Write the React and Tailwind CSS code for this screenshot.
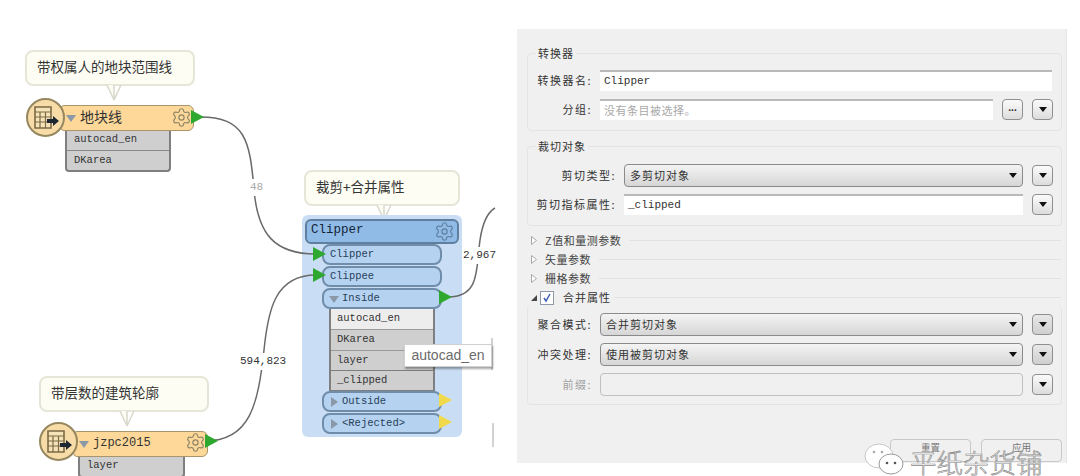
import { Settings } from "lucide-react";

const mono = "font-['Liberation_Mono','Noto_Sans_CJK_SC',monospace]";
const cjk = "font-['Noto_Sans_CJK_SC','Noto_Sans',sans-serif]";

// --- canvas bits ---
const Note = ({ className, tail, children }) => (
  <div className={`absolute h-[36px] rounded-lg border-2 border-[#e6e6d8] bg-[#fdfdf3] flex items-center pl-[10px] pb-[3px] text-[13.500px] text-[#333] ${cjk} ${className}`}>
    {children}
    <svg className="absolute top-[33px]" style={{ left: tail }} width="16" height="18" viewBox="0 0 16 18">
      <path d="M1 0 L8 15 L8 0 M15 0 L8 15" fill="#fdfdf3" stroke="#d8d8cc" strokeWidth="1.5" />
    </svg>
  </div>
);

const Port = ({ color = "#2fa82f", className }) => (
  <svg className={`absolute ${className}`} width="13" height="14" viewBox="0 0 13 14">
    <path d="M0 0 L13 7 L0 14 Z" fill={color} />
  </svg>
);

const Caret = ({ right, color = "#8a98a8" }) => (
  <svg width="10" height="10" viewBox="0 0 10 10" className="shrink-0">
    {right ? <path d="M2 0 L9 5 L2 10 Z" fill={color} /> : <path d="M0 2 L10 2 L5 9 Z" fill={color} />}
  </svg>
);

const TableBadge = ({ className }) => (
  <div className={`absolute size-[39px] rounded-full border-2 border-[#96875f] bg-[#f7dca8] flex items-center justify-center ${className}`}>
    <svg width="28" height="24" viewBox="0 0 28 24">
      <path d="M3 1 H19 V22 H3 Z" fill="#f5e2b8" stroke="#7c6a45" strokeWidth="1.6" />
      <path d="M3 6 H19 M3 11 H19 M3 16 H19 M8 6 V22 M13.500 6 V22" stroke="#7c6a45" strokeWidth="1.2" />
      <path d="M15 13 H21 V10 L27 15 L21 20 V17 H15 Z" fill="#1d2733" />
    </svg>
  </div>
);

const Gear = ({ className }) => <Settings className={`absolute size-[21px] text-[#8d8467] ${className}`} strokeWidth={1.3} />;

const Reader = ({ className, name, nameClass, left, width }) => (
  <div
    className={`absolute flex items-center h-[26px] rounded-r-md rounded-l-sm border border-[#a8956c] bg-[#fdd899] ${className}`}
    style={{ left, width }}
  >
    <div className="w-[5px] shrink-0" />
    <Caret />
    <span className={`ml-[4px] -mt-[3px] text-[#333] ${nameClass}`}>{name}</span>
  </div>
);

const AttrRows = ({ className, rows }) => (
  <div className={`absolute flex flex-col border-x-2 border-b-2 border-[#7f7f7f] rounded-b bg-[#cfcfcf] ${mono} text-[10.500px] text-[#333] ${className}`}>
    {rows.map((r, i) => (
      <div key={r} className={`h-[20px] flex items-center pl-[7px] ${i > 0 ? "border-t border-[#8a8a8a]" : ""}`}>
        {r}
      </div>
    ))}
  </div>
);

const ClipPort = ({ label, arrow }) => (
  <div className={`h-[21px] mb-[1px] w-[120px] rounded-lg border-2 border-[#6f8daa] bg-[#b5d3f1] flex items-center pl-[5px] gap-[3px] ${mono} text-[10.500px] text-[#274058]`}>
    {arrow === "down" && <Caret />}
    {arrow === "right" && <Caret right />}
    <span className={arrow ? "" : "pl-[1px]"}>{label}</span>
  </div>
);

const EdgeLabel = ({ className, children }) => (
  <span className={`absolute bg-white px-[1px] ${mono} text-[11px] text-[#333] ${className}`}>{children}</span>
);

// --- panel bits ---
const Group = ({ title, className, children }) => (
  <div className={`relative ml-[10px] mr-[4px] border border-[#e4e4e4] rounded-sm ${className}`}>
    {title && <span className={`absolute -top-[8px] left-[8px] bg-[#f0f0f0] px-[2px] ${cjk} text-[11px] tracking-[1px] leading-[14px] text-[#333]`}>{title}</span>}
    {children}
  </div>
);

const Label = ({ w, muted, children }) => (
  <span className={`shrink-0 text-right pr-[5px] ${cjk} text-[11px] tracking-[1.5px] ${muted ? "text-[#a0a0a0]" : "text-[#333]"}`} style={{ width: w }}>
    {children}
  </span>
);

const TextBox = ({ w, mono: isMono, placeholder, children }) => (
  <div
    className={`h-[21px] border-t-2 border-[#b9b9b9] bg-white flex items-center pl-[4px] ${isMono ? `${mono} text-[11px] text-[#333]` : `${cjk} text-[11px] tracking-[0.5px] text-[#a8a8a8]`}`}
    style={{ width: w }}
  >
    {placeholder || children}
  </div>
);

const TinyCaret = () => (
  <svg width="8" height="5" viewBox="0 0 8 5">
    <path d="M0 0 H8 L4 5 Z" fill="#111" />
  </svg>
);

const Select = ({ w, children }) => (
  <div
    className={`h-[23px] rounded-sm border border-[#8a8a8a] bg-gradient-to-b from-[#f4f4f4] to-[#d6d6d6] flex items-center justify-between pl-[5px] pr-[5px] ${cjk} text-[11px] tracking-[1px] text-[#333]`}
    style={{ width: w }}
  >
    {children}
    <TinyCaret />
  </div>
);

const SquareBtn = ({ children, dark }) => (
  <div className={`size-[21px] ml-[6px] shrink-0 rounded-sm border border-[#8f8f8f] flex items-center justify-center bg-gradient-to-b ${dark ? "from-[#e8e8e8] to-[#cfcfcf]" : "from-[#fbfbfb] to-[#dcdcdc]"}`}>
    {children || <TinyCaret />}
  </div>
);

const Collapsed = ({ children }) => (
  <div className="flex items-center h-[19px] pl-[14px] gap-[8px]">
    <svg width="6" height="9" viewBox="0 0 6 9"><path d="M0.500 0.500 L5.500 4.500 L0.500 8.500 Z" fill="#fff" stroke="#a8a8a8" /></svg>
    <span className={`${cjk} text-[11px] tracking-[0.5px] text-[#444]`}>{children}</span>
    <div className="flex-1 border-t border-[#e2e2e2] mr-[5px]" />
  </div>
);

const App = () => (
  <div className="flex w-[1080px] h-[476px] overflow-hidden bg-white">
    {/* Workbench canvas */}
    <div className="relative w-[517px] h-[476px] shrink-0 overflow-hidden">
      <Note className="left-[25px] top-[50px] w-[170px]" tail="79px">带权属人的地块范围线</Note>
      <Note className="left-[304px] top-[170px] w-[156px]" tail="70px">裁剪+合并属性</Note>
      <Note className="left-[39px] top-[376px] w-[170px]" tail="78px">带层数的建筑轮廓</Note>

      {/* Clipper transformer */}
      <div className="absolute left-[302px] top-[215px] w-[160px] h-[222px] rounded-md bg-[#c9def4] flex flex-col">
        <div className={`relative mx-[3px] mt-[4px] h-[25px] rounded-md border-2 border-[#5f7f9e] bg-[#8fbbe6] flex items-center pl-[4px] pb-[2px] ${mono} text-[12.500px] text-[#14263a]`}>
          Clipper
          <Gear className="!text-[#5f7f9e] right-[2px] top-[0px]" />
        </div>
        <div className="pl-[20px] flex flex-col">
          <ClipPort label="Clipper" />
          <ClipPort label="Clippee" />
          <ClipPort label="Inside" arrow="down" />
          <div className={`w-[106px] -mt-[1px] ml-[7px] border-x-2 border-[#7f7f7f] bg-[#cfcfcf] ${mono} text-[10.500px] text-[#333]`}>
            <div className="h-[20px] pl-[6px] flex items-center bg-[#eeeded]">autocad_en</div>
            <div className="h-[21px] pl-[6px] flex items-center border-t border-[#9a9a9a]">DKarea</div>
            <div className="h-[20px] pl-[6px] flex items-center border-t border-[#9a9a9a]">layer</div>
            <div className="h-[21px] pl-[6px] flex items-center border-y border-[#7f7f7f]">_clipped</div>
          </div>
          <ClipPort label="Outside" arrow="right" />
          <ClipPort label="<Rejected>" arrow="right" />
        </div>
      </div>

      <svg className="absolute inset-0" width="517" height="476" viewBox="0 0 517 476" fill="none">
        <path d="M200 117 C245 117 250 140 254 190 C258 235 275 254 316 254" stroke="#6a6a6a" strokeWidth="1.500" />
        <path d="M205 441 C250 441 258 405 264 350 C268 310 275 275 316 275" stroke="#6a6a6a" strokeWidth="1.500" />
        <path d="M448 297 C480 297 476 270 480 240 C483 220 488 212 495 208" stroke="#6a6a6a" strokeWidth="1.500" />
        <path d="M492 338 V370 M493 423 V447" stroke="#c4c4c4" strokeWidth="1.500" />
      </svg>

      <EdgeLabel className="left-[249px] top-[179px] !text-[#a9a9a9]">48</EdgeLabel>
      <EdgeLabel className="left-[239px] top-[353px]">594,823</EdgeLabel>
      <EdgeLabel className="left-[462px] top-[247px]">2,967</EdgeLabel>

      {/* reader: 地块线 */}
      <AttrRows className="left-[65px] top-[130px] w-[106px]" rows={["autocad_en", "DKarea"]} />
      <Reader className="top-[105px]" left="60px" width="134px" name="地块线" nameClass={`${cjk} text-[14px]`} />
      <TableBadge className="left-[26px] top-[98px]" />
      <Gear className="left-[171px] top-[107px]" />
      <Port className="left-[191px] top-[110px]" />

      <Port className="left-[313px] top-[247px]" />
      <Port className="left-[313px] top-[268px]" />
      <Port className="left-[439px] top-[290px]" />
      <Port color="#f1d94c" className="left-[439px] top-[393px]" />
      <Port color="#f1d94c" className="left-[439px] top-[415px]" />

      {/* hover tooltip */}
      <div className="absolute left-[404px] top-[344px] w-[88px] h-[23px] bg-white border border-[#d0d0d0] shadow-[1px_2px_2px_rgba(0,0,0,0.35)] flex items-center justify-center font-['Liberation_Sans',sans-serif] text-[14px] text-[#6b6b6b]">
        autocad_en
      </div>

      {/* reader: jzpc2015 */}
      <AttrRows className="left-[78px] top-[456px] w-[107px]" rows={["layer"]} />
      <Reader className="top-[431px]" left="73px" width="135px" name="jzpc2015" nameClass={`${mono} text-[12px]`} />
      <TableBadge className="left-[39px] top-[422px]" />
      <Gear className="left-[185px] top-[432px]" />
      <Port className="left-[205px] top-[434px]" />
    </div>

    {/* Parameters panel */}
    <div className="relative w-[550px] h-[434px] mt-[29px] shrink-0 bg-[#f0f0f0] border-r border-[#e6e6e6] pt-[24px] flex flex-col">
      <Group title="转换器" className="h-[78px] pt-[16px]">
        <div className="flex items-center gap-[3px]">
          <Label w="69px">转换器名:</Label>
          <TextBox w="452px" mono>Clipper</TextBox>
        </div>
        <div className="flex items-center gap-[3px] mt-[8px]">
          <Label w="69px">分组:</Label>
          <TextBox w="393px" placeholder="没有条目被选择。" />
          <SquareBtn>
            <span className="text-[10px] leading-none font-bold text-[#222]">···</span>
          </SquareBtn>
          <SquareBtn />
        </div>
      </Group>

      <Group title="裁切对象" className="h-[80px] mt-[15px] pt-[17px]">
        <div className="flex items-center gap-[3px]">
          <Label w="93px">剪切类型:</Label>
          <Select w="399px">多剪切对象</Select>
          <SquareBtn />
        </div>
        <div className="flex items-center gap-[3px] mt-[7px]">
          <Label w="93px">剪切指标属性:</Label>
          <TextBox w="399px" mono>_clipped</TextBox>
          <SquareBtn />
        </div>
      </Group>

      <div className="mt-[5px] flex flex-col">
        <Collapsed>Z值和量测参数</Collapsed>
        <Collapsed>矢量参数</Collapsed>
        <Collapsed>栅格参数</Collapsed>
        <div className="flex items-center h-[19px] pl-[14px] gap-[3px]">
          <svg width="6" height="6" viewBox="0 0 6 6"><path d="M6 0 V6 H0 Z" fill="#444" /></svg>
          <div className="size-[14px] border border-[#8d99a8] bg-white flex items-center justify-center">
            <svg width="10" height="10" viewBox="0 0 10 10" fill="none"><path d="M2 5 L4 8 L8 1" stroke="#3a5fb0" strokeWidth="1.500" /></svg>
          </div>
          <span className={`ml-[6px] ${cjk} text-[11px] tracking-[1px] text-[#333]`}>合并属性</span>
          <div className="flex-1 border-t border-[#e2e2e2] mr-[5px]" />
        </div>
      </div>

      <Group className="h-[99px] -mt-[1px] pt-[7px] border-t-0 flex flex-col gap-[7px]">
        <div className="flex items-center gap-[3px]">
          <Label w="69px">聚合模式:</Label>
          <Select w="423px">合并剪切对象</Select>
          <SquareBtn dark />
        </div>
        <div className="flex items-center gap-[3px]">
          <Label w="69px">冲突处理:</Label>
          <Select w="423px">使用被剪切对象</Select>
          <SquareBtn dark />
        </div>
        <div className="flex items-center gap-[3px]">
          <Label w="69px" muted>前缀:</Label>
          <div className="w-[423px] h-[23px] rounded-sm border border-[#c0c0c0] bg-[#f0f0f0]" />
          <SquareBtn />
        </div>
      </Group>

      <div className="mt-auto mb-[1px] flex justify-end gap-[10px] pr-[4px]">
        <div className={`w-[81px] h-[23px] pb-[8px] border border-[#c8c8c8] rounded-sm flex items-center justify-center ${cjk} text-[9.500px] leading-[12px] text-[#777]`}>重置</div>
        <div className={`w-[81px] h-[23px] pb-[8px] border border-[#c8c8c8] rounded-sm flex items-center justify-center ${cjk} text-[9.500px] leading-[12px] text-[#777]`}>应用</div>
      </div>

      {/* watermark */}
      <div className="absolute left-[347px] top-[413px] flex items-start gap-[4px]">
        <svg width="42" height="34" viewBox="0 0 42 34">
          <ellipse cx="15" cy="14" rx="14" ry="12" fill="#fff" stroke="#c8c8c8" />
          <ellipse cx="27" cy="22" rx="12" ry="10" fill="#fff" stroke="#9a9a9a" />
          <circle cx="23" cy="21" r="1.300" fill="#555" />
          <circle cx="31" cy="21" r="1.300" fill="#555" />
          <circle cx="10" cy="10" r="1.300" fill="#aaa" />
          <circle cx="18" cy="10" r="1.300" fill="#aaa" />
        </svg>
        <span className={`mt-[6px] ${cjk} text-[26.500px] leading-[27px] font-light text-white [-webkit-text-stroke:0.7px_#8c8c8c] whitespace-nowrap`}>平纸杂货铺</span>
      </div>
    </div>
  </div>
);

export default App;
